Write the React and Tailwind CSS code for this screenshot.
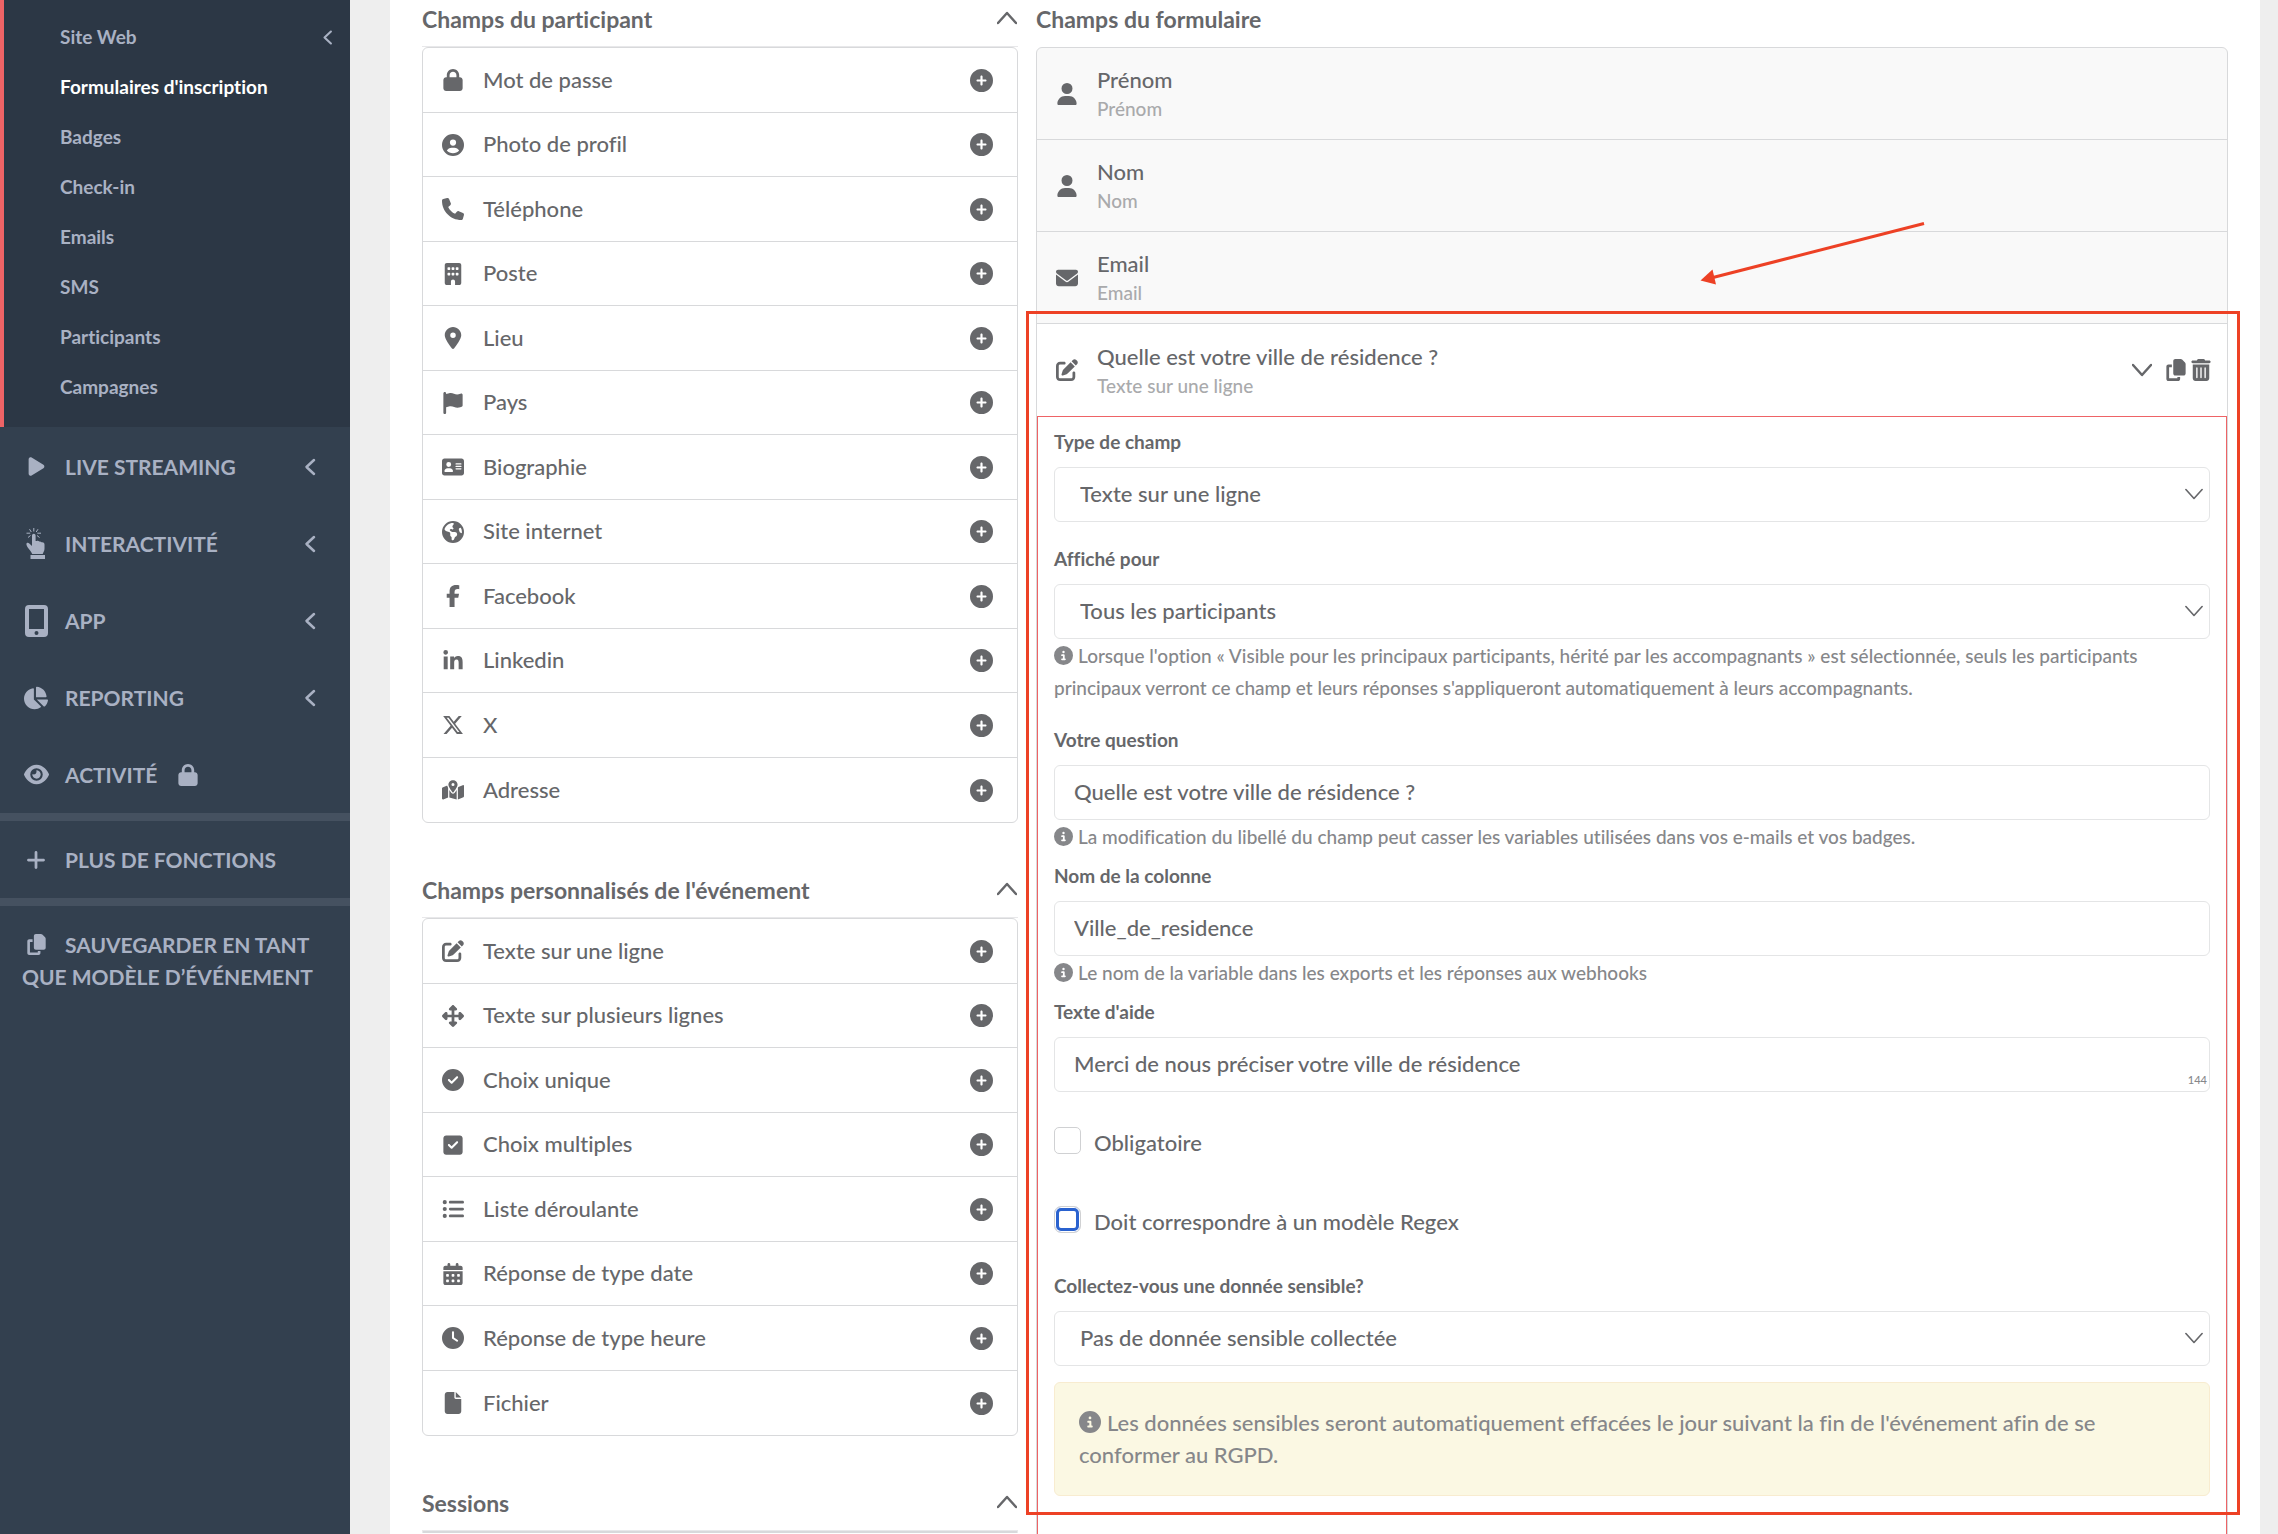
import {
  FaAddressCard,
  FaBuilding,
  FaCalendarDays,
  FaCircleCheck,
  FaCircleInfo,
  FaCirclePlus,
  FaCircleUser,
  FaClock,
  FaCopy,
  FaEarthAmericas,
  FaEnvelope,
  FaEye,
  FaFacebookF,
  FaFile,
  FaFlag,
  FaLinkedinIn,
  FaListUl,
  FaLocationDot,
  FaLock,
  FaMapLocationDot,
  FaPenToSquare,
  FaPhone,
  FaPlay,
  FaPlus,
  FaSquareCheck,
  FaTrashCan,
  FaUpDownLeftRight,
  FaUser,
  FaXTwitter,
} from "react-icons/fa6";
import { FaChartPie } from "react-icons/fa";

const subMenu = [
  { label: "Site Web", chevron: true },
  { label: "Formulaires d'inscription", active: true },
  { label: "Badges" },
  { label: "Check-in" },
  { label: "Emails" },
  { label: "SMS" },
  { label: "Participants" },
  { label: "Campagnes" },
];

const mainMenu = [
  { label: "LIVE STREAMING", icon: <FaPlay className="size-[21px]" />, chevron: true },
  { label: "INTERACTIVITÉ", icon: <PointerIcon />, chevron: true },
  { label: "APP", icon: <TabletIcon />, chevron: true },
  { label: "REPORTING", icon: <FaChartPie className="size-6" />, chevron: true },
  { label: "ACTIVITÉ", icon: <FaEye className="size-[25px]" />, locked: true },
];

const participantFields = [
  { label: "Mot de passe", icon: FaLock },
  { label: "Photo de profil", icon: FaCircleUser },
  { label: "Téléphone", icon: FaPhone },
  { label: "Poste", icon: FaBuilding },
  { label: "Lieu", icon: FaLocationDot },
  { label: "Pays", icon: FaFlag },
  { label: "Biographie", icon: FaAddressCard },
  { label: "Site internet", icon: FaEarthAmericas },
  { label: "Facebook", icon: FaFacebookF },
  { label: "Linkedin", icon: FaLinkedinIn },
  { label: "X", icon: FaXTwitter },
  { label: "Adresse", icon: FaMapLocationDot },
];

const customFields = [
  { label: "Texte sur une ligne", icon: FaPenToSquare },
  { label: "Texte sur plusieurs lignes", icon: FaUpDownLeftRight },
  { label: "Choix unique", icon: FaCircleCheck },
  { label: "Choix multiples", icon: FaSquareCheck },
  { label: "Liste déroulante", icon: FaListUl },
  { label: "Réponse de type date", icon: FaCalendarDays },
  { label: "Réponse de type heure", icon: FaClock },
  { label: "Fichier", icon: FaFile },
];

function PointerIcon() {
  return (
    <svg viewBox="0 0 20 32" className="h-8 w-5" fill="currentColor">
      <path d="M6 7.5a1.8 1.8 0 0 1 3.6 0V13h1.2c.8-.5 1.9-.3 2.4.5.9-.3 1.9 0 2.3.8 1.6-.4 3 .5 3 2.2v4.2c0 2-1.2 3.3-1.8 5.3H6.2C5 22.6.8 19.5.4 16.2c-.2-1.5 1.7-2 2.9-.8L6 18z" />
      <path d="M4.500 27h14.500v4H4.500z" />
      <path
        d="M7.800 0v3.500M3.500 1.200l1.800 2.800M12 1.200l-1.800 2.800M.5 5.200h3.700M11.300 5.200h3.700M2 9.500l2.500-2M13.500 9.500l-2.500-2"
        stroke="currentColor"
        strokeWidth="1"
        fill="none"
      />
    </svg>
  );
}

function TabletIcon() {
  return (
    <svg viewBox="0 0 23 32" className="h-8 w-[23px]" fill="currentColor">
      <path
        fillRule="evenodd"
        d="M4 0h15a4 4 0 0 1 4 4v24a4 4 0 0 1-4 4H4a4 4 0 0 1-4-4V4a4 4 0 0 1 4-4zM4 4v20h15V4zM11.500 26a2 2 0 1 0 0 4 2 2 0 0 0 0-4z"
      />
    </svg>
  );
}

function Chevron({ className, thin = false, points }) {
  return (
    <svg viewBox="0 0 20 20" className={className} fill="none">
      <polyline
        points={points}
        stroke="currentColor"
        strokeWidth={thin ? 1.8 : 2.5}
        strokeLinecap="round"
        strokeLinejoin="round"
      />
    </svg>
  );
}

const LEFT = "14,3 6.500,10 14,17";
const UP = "1,14 10,4 19,14";
const DOWN = "1,5 10,15 19,5";

function Sidebar() {
  return (
    <aside className="w-[350px] shrink-0 bg-[#33404f] font-bold text-[#a9b1c3]">
      <ul className="border-l-4 border-[#ee6366] bg-[#2c3745] pt-3 pb-[15px]">
        {subMenu.map(({ label, chevron, active }) => (
          <li key={label}>
            <a
              href="#"
              className={`flex h-[50px] items-center justify-between pr-[14px] pl-14 text-[19px] ${
                active ? "text-white" : ""
              }`}
            >
              {label}
              {chevron && <Chevron points={LEFT} className="size-[17px]" />}
            </a>
          </li>
        ))}
      </ul>

      <ul className="border-b-8 border-[#455160] pt-px text-[21px]">
        {mainMenu.map(({ label, icon, chevron, locked }) => (
          <li key={label}>
            <a href="#" className="flex h-[77px] items-center pr-[30px] pl-[22px]">
              <span className="flex w-[28px] justify-center">{icon}</span>
              <span className="ml-[15px]">{label}</span>
              {locked && <FaLock className="ml-5 size-[22px]" />}
              {chevron && <Chevron points={LEFT} className="ml-auto size-5" />}
            </a>
          </li>
        ))}
      </ul>

      <a
        href="#"
        className="flex h-[85px] items-center border-b-8 border-[#455160] pl-[22px] text-[21px]"
      >
        <span className="flex w-[28px] justify-center">
          <FaPlus className="size-[22px]" />
        </span>
        <span className="ml-[15px]">PLUS DE FONCTIONS</span>
      </a>

      <a href="#" className="block py-[23px] pl-[22px] text-[21px] leading-8">
        <FaCopy className="mr-[18px] ml-1 inline size-[21px] align-[-2px]" />
        SAUVEGARDER EN TANT
        <br />
        QUE MODÈLE D’ÉVÉNEMENT
      </a>
    </aside>
  );
}

function PaletteHeading({ title }) {
  return (
    <button className="flex h-[52px] w-full items-center justify-between border-b border-[#e8e8ea] pr-px pb-[3px] text-left text-[23px] font-bold">
      {title}
      <Chevron points={UP} className="size-5" />
    </button>
  );
}

function FieldPalette({ fields }) {
  return (
    <ul className="mb-[43px] rounded-md border border-[#d8d9db]">
      {fields.map(({ label, icon: Icon }) => (
        <li
          key={label}
          className="flex items-center border-b border-[#d8d9db] pr-6 pl-[17px] last:border-b-0 odd:h-[65px] even:h-16"
        >
          <span className="flex w-[26px] justify-center">
            <Icon className="h-[22px] w-auto" />
          </span>
          <span className="ml-[17px] flex-1 pb-0.5">{label}</span>
          <button aria-label={`Ajouter ${label}`}>
            <FaCirclePlus className="size-[23px]" />
          </button>
        </li>
      ))}
    </ul>
  );
}

function FormRow({ icon: Icon, title, type, children }) {
  return (
    <div className="relative flex h-[92px] items-center pr-[15px] pl-[17px]">
      <span className="flex w-[26px] justify-center">
        <Icon className="size-[22px]" />
      </span>
      <div className="ml-[17px] flex-1 pb-px">
        <p className="leading-8">{title}</p>
        <p className="text-[19px] leading-[26px] text-[#a9aaac]">{type}</p>
      </div>
      {children}
    </div>
  );
}

function Label({ htmlFor, children }) {
  return (
    <label htmlFor={htmlFor} className="block pb-[11px] text-[19px] leading-[29px] font-bold">
      {children}
    </label>
  );
}

function SelectField({ id, label, value }) {
  return (
    <div>
      <Label htmlFor={id}>{label}</Label>
      <div className="relative">
        <select
          id={id}
          className="block h-[55px] w-full appearance-none rounded-md border border-[#e4e5e6] bg-white px-[25px] pb-0.5"
        >
          <option>{value}</option>
        </select>
        <Chevron
          thin
          points={DOWN}
          className="pointer-events-none absolute top-[18px] right-[7px] size-[18px]"
        />
      </div>
    </div>
  );
}

function TextField({ id, label, value, counter }) {
  return (
    <div>
      <Label htmlFor={id}>{label}</Label>
      <div className="relative">
        <input
          id={id}
          type="text"
          defaultValue={value}
          className="block h-[55px] w-full rounded-md border border-[#e4e5e6] bg-white px-[19px] pb-0.5"
        />
        {counter && (
          <span className="absolute right-[3px] bottom-1 text-[11px] leading-4 text-[#86878a]">
            {counter}
          </span>
        )}
      </div>
    </div>
  );
}

function Help({ children }) {
  return (
    <p className="pt-px pb-px text-[19px] leading-8 text-[#86878a]">
      <FaCircleInfo className="mr-[5px] inline size-[19px] align-[-2px]" />
      {children}
    </p>
  );
}

function Checkbox({ id, label, focused = false }) {
  return (
    <div className="flex items-start">
      <input
        id={id}
        type="checkbox"
        className={`size-[27px] appearance-none border border-[#d0d1d3] bg-white ${
          focused
            ? "rounded-[7px] shadow-[inset_0_0_0_1px_#fff,inset_0_0_0_4px_#2a62cf]"
            : "rounded-[5px]"
        }`}
      />
      <label htmlFor={id} className="ml-[13px] leading-8">
        {label}
      </label>
    </div>
  );
}

function FieldSettings() {
  return (
    <div className="border border-[#ee6366] px-4 pt-2.5 pb-24">
      <SelectField id="type" label="Type de champ" value="Texte sur une ligne" />

      <div className="mt-[22px]">
        <SelectField id="audience" label="Affiché pour" value="Tous les participants" />
        <Help>
          Lorsque l'option « Visible pour les principaux participants, hérité par les
          accompagnants » est sélectionnée, seuls les participants
          <br />
          principaux verront ce champ et leurs réponses s'appliqueront automatiquement à
          leurs accompagnants.
        </Help>
      </div>

      <div className="mt-5">
        <TextField
          id="question"
          label="Votre question"
          value="Quelle est votre ville de résidence ?"
        />
        <Help>
          La modification du libellé du champ peut casser les variables utilisées dans vos
          e-mails et vos badges.
        </Help>
      </div>

      <div className="mt-[7px]">
        <TextField id="column" label="Nom de la colonne" value="Ville_de_residence" />
        <Help>Le nom de la variable dans les exports et les réponses aux webhooks</Help>
      </div>

      <div className="mt-[7px]">
        <TextField
          id="hint"
          label="Texte d'aide"
          value="Merci de nous préciser votre ville de résidence"
          counter="144"
        />
      </div>

      <div className="mt-[35px] mb-[33px] flex flex-col gap-[47px]">
        <Checkbox id="required" label="Obligatoire" />
        <Checkbox id="regex" label="Doit correspondre à un modèle Regex" focused />
      </div>

      <SelectField
        id="sensitive"
        label="Collectez-vous une donnée sensible?"
        value="Pas de donnée sensible collectée"
      />

      <p className="mt-4 rounded-md border border-[#f8ecd0] bg-[#fbf8e3] p-6 leading-8 text-[#86878a]">
        <FaCircleInfo className="mr-1.5 inline size-[22px] align-[-2px]" />
        Les données sensibles seront automatiquement effacées le jour suivant la fin de
        l'événement afin de se
        <br />
        conformer au RGPD.
      </p>
    </div>
  );
}

function Arrow() {
  return (
    <svg
      viewBox="0 0 226 64"
      className="absolute -top-2.5 right-[301px] h-16 w-[226px]"
      fill="#ed4125"
    >
      <line x1="224" y1="1.500" x2="13" y2="55.500" stroke="#ed4125" strokeWidth="3" />
      <polygon points="0.500,58.500 12.500,47.500 16,62.500" />
    </svg>
  );
}

export default function App() {
  return (
    <div className="flex h-screen overflow-hidden bg-[#eeeeee] font-['Lato',sans-serif] text-[22px] font-medium text-[#66676a] [font-variant-ligatures:none]">
      <Sidebar />

      <main className="mr-[18px] ml-10 flex-1 bg-white px-8">
        <div className="grid grid-cols-[1fr_2fr] gap-[18px]">
          <section>
            <div className="-mt-[5px]">
              <PaletteHeading title="Champs du participant" />
              <FieldPalette fields={participantFields} />
            </div>
            <PaletteHeading title="Champs personnalisés de l'événement" />
            <FieldPalette fields={customFields} />
            <PaletteHeading title="Sessions" />
            <FieldPalette fields={[]} />
          </section>

          <section>
            <h2 className="-mt-[5px] flex h-[52px] items-center pb-[3px] text-[23px] font-bold">
              Champs du formulaire
            </h2>
            <div className="divide-y divide-[#d8d9db] rounded-t-md border border-[#d8d9db] bg-[#f9f9f9]">
              <FormRow icon={FaUser} title="Prénom" type="Prénom" />
              <FormRow icon={FaUser} title="Nom" type="Nom" />
              <FormRow icon={FaEnvelope} title="Email" type="Email">
                <Arrow />
              </FormRow>
              <div className="relative bg-white">
                <FormRow
                  icon={FaPenToSquare}
                  title="Quelle est votre ville de résidence ?"
                  type="Texte sur une ligne"
                >
                  <button aria-label="Replier" className="mr-[13px]">
                    <Chevron points={DOWN} className="size-5" />
                  </button>
                  <button aria-label="Dupliquer" className="mr-[3px]">
                    <FaCopy className="size-[22px]" />
                  </button>
                  <button aria-label="Supprimer">
                    <FaTrashCan className="size-[22px]" />
                  </button>
                </FormRow>
                <FieldSettings />
                {/* highlight around the edited field */}
                <div className="pointer-events-none absolute -top-[13px] -right-[13px] bottom-[78px] -left-[11px] border-[3px] border-[#ed4125]" />
              </div>
            </div>
          </section>
        </div>
      </main>
    </div>
  );
}
